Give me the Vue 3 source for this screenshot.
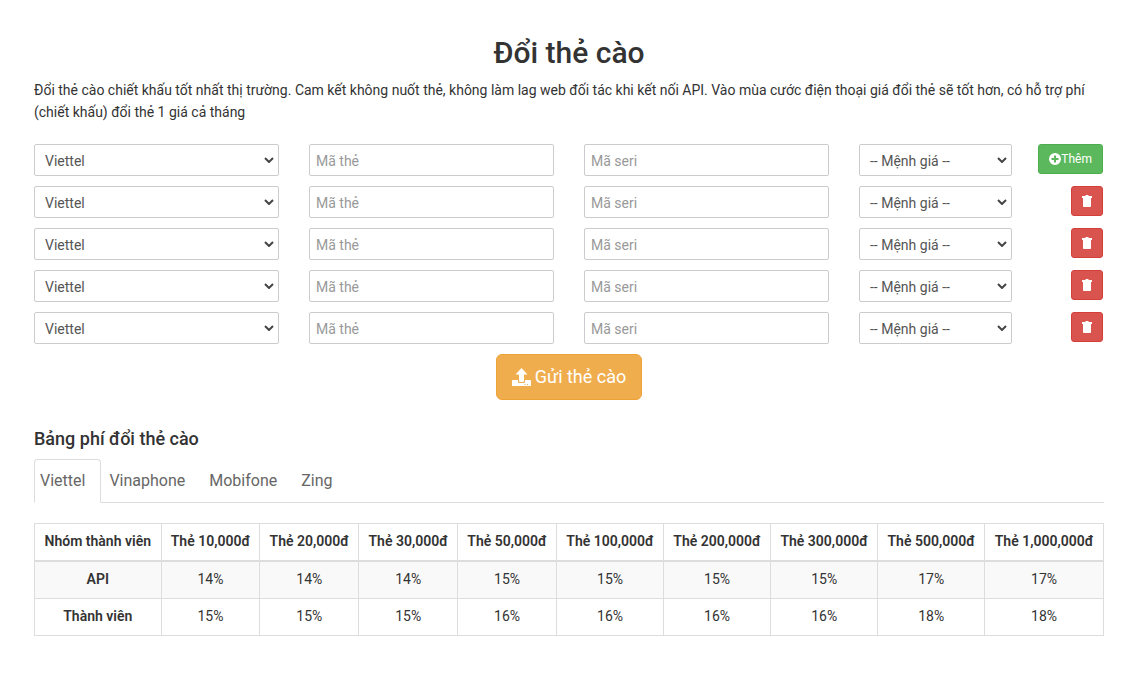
<script setup>
import { ref } from 'vue'

const carriers = ['Viettel', 'Vinaphone', 'Mobifone', 'Zing']
const amounts = ['10,000đ', '20,000đ', '30,000đ', '50,000đ', '100,000đ', '200,000đ', '300,000đ', '500,000đ', '1,000,000đ']
const groups = [
  { name: 'API', fees: [14, 14, 14, 15, 15, 15, 15, 17, 17] },
  { name: 'Thành viên', fees: [15, 15, 15, 16, 16, 16, 16, 18, 18] },
]

let nextId = 0
const newRow = () => ({ id: nextId++, carrier: 'Viettel', code: '', serial: '', amount: '' })
const rows = ref(Array.from({ length: 5 }, newRow))
const activeTab = ref('Viettel')

const addRow = () => rows.value.push(newRow())
const removeRow = (id) => {
  rows.value = rows.value.filter((row) => row.id !== id)
}
</script>

<template>
  <main class="page">
    <h1 class="title">Đổi thẻ cào</h1>
    <p class="intro">
      Đổi thẻ cào chiết khấu tốt nhất thị trường. Cam kết không nuốt thẻ, không làm lag web đối tác khi kết nối API. Vào mùa cước điện thoại giá đổi thẻ sẽ tốt hơn, có hỗ trợ phí (chiết khấu) đổi thẻ 1 giá cả tháng
    </p>

    <form @submit.prevent>
      <div v-for="(row, i) in rows" :key="row.id" class="row">
        <div class="select-box wide">
          <select v-model="row.carrier" class="control" aria-label="Nhà mạng">
            <option v-for="c in carriers" :key="c" :value="c">{{ c }}</option>
          </select>
          <svg class="chevron" viewBox="0 0 10 6" aria-hidden="true"><path d="M1 1l4 4 4-4" /></svg>
        </div>
        <input v-model="row.code" class="control wide" type="text" placeholder="Mã thẻ" aria-label="Mã thẻ" />
        <input v-model="row.serial" class="control wide" type="text" placeholder="Mã seri" aria-label="Mã seri" />
        <div class="select-box medium">
          <select v-model="row.amount" class="control" aria-label="Mệnh giá">
            <option value="">-- Mệnh giá --</option>
            <option v-for="a in amounts" :key="a" :value="a">{{ a }}</option>
          </select>
          <svg class="chevron" viewBox="0 0 10 6" aria-hidden="true"><path d="M1 1l4 4 4-4" /></svg>
        </div>
        <div class="action">
          <button v-if="i === 0" type="button" class="btn add" @click="addRow">
            <svg class="icon" viewBox="0 0 12 12" aria-hidden="true">
              <path fill-rule="evenodd" d="M6 0a6 6 0 1 0 0 12A6 6 0 0 0 6 0zM5 2.5h2V5h2.500v2H7v2.500H5V7H2.500V5H5z" />
            </svg>Thêm
          </button>
          <button v-else type="button" class="btn remove" aria-label="Xóa" @click="removeRow(row.id)">
            <svg class="icon" viewBox="0 0 12 14" aria-hidden="true">
              <path d="M4.500 1h3v1H11v2H1V2h3.500zM2 4h8v8c0 .6-.4 1-1 1H3c-.6 0-1-.4-1-1z" />
            </svg>
          </button>
        </div>
      </div>
      <div class="submit-line">
        <button type="submit" class="btn submit">
          <svg class="icon" viewBox="0 0 19 18" aria-hidden="true">
            <path d="M9.500 0l6 6.500H12V13q0 1-1 1H8q-1 0-1-1V6.500H3.500z" />
            <path fill-rule="evenodd" d="M.5 12H6v1.500Q6 15 7.500 15h4q1.500 0 1.500-1.500V12h5.500l.5.5V18H0v-5.500zM12.500 16v1h1v-1zm2.500 0v1h1v-1z" />
          </svg>
          Gửi thẻ cào
        </button>
      </div>
    </form>

    <h2 class="subtitle">Bảng phí đổi thẻ cào</h2>
    <nav class="tabs">
      <a v-for="c in carriers" :key="c" href="#" class="tab" :class="{ active: c === activeTab }" @click.prevent="activeTab = c">{{ c }}</a>
    </nav>

    <table class="fees">
      <thead>
        <tr>
          <th scope="col">Nhóm thành viên</th>
          <th v-for="a in amounts" :key="a" scope="col">Thẻ {{ a }}</th>
        </tr>
      </thead>
      <tbody>
        <tr v-for="g in groups" :key="g.name">
          <th scope="row">{{ g.name }}</th>
          <td v-for="(fee, i) in g.fees" :key="i">{{ fee }}%</td>
        </tr>
      </tbody>
    </table>
  </main>
</template>

<style>
body {
  background: #fff;
}
</style>

<style scoped>
.page,
.page * {
  box-sizing: border-box;
}
.page {
  padding: 36px 30px 48px 34px;
  color: #333;
  font: 14px/20px Roboto, "Noto Sans", sans-serif;
}
.title {
  margin: 0 0 9px;
  font-size: 30px;
  line-height: 34px;
  font-weight: 500;
  text-align: center;
}
.intro {
  margin: 0 0 21px;
  line-height: 22px;
}
.row {
  display: grid;
  grid-template-columns: repeat(12, minmax(0, 1fr));
  column-gap: 30px;
  margin-bottom: 10px;
}
.wide {
  grid-column: span 3;
}
.medium {
  grid-column: span 2;
}
.select-box {
  position: relative;
}
.control {
  display: block;
  width: 100%;
  height: 32px;
  padding: 1px 6px 0;
  border: 1px solid #ccc;
  border-radius: 2px;
  background: #fff;
  color: #555;
  font: inherit;
  appearance: none;
}
select.control {
  padding-left: 10px;
}
.control::placeholder {
  color: #999;
  opacity: 1;
}
.chevron {
  position: absolute;
  top: 13px;
  right: 5px;
  width: 10px;
  height: 6px;
  fill: none;
  stroke: #444;
  stroke-width: 2;
  pointer-events: none;
}
.action {
  display: flex;
  justify-content: flex-end;
  align-items: flex-start;
  padding-right: 1px;
}
.btn {
  display: inline-flex;
  align-items: center;
  justify-content: center;
  flex: none;
  border: 1px solid;
  border-radius: 3px;
  color: #fff;
  font-family: inherit;
  cursor: pointer;
}
.icon {
  fill: currentColor;
}
.add,
.remove {
  height: 30px;
  padding: 0 10px;
  font-size: 12px;
  line-height: 18px;
}
.add {
  background: #5cb85c;
  border-color: #4cae4c;
}
.remove {
  background: #d9534f;
  border-color: #d43f3a;
}
.add .icon {
  width: 12px;
  height: 12px;
}
.remove .icon {
  width: 12px;
  height: 14px;
  margin: 0 -1px;
}
.submit-line {
  display: flex;
  justify-content: center;
}
.submit {
  gap: 4px;
  height: 46px;
  padding: 0 15px;
  border-radius: 6px;
  background: #f0ad4e;
  border-color: #eea236;
  font-size: 18px;
  line-height: 24px;
}
.submit .icon {
  width: 19px;
  height: 18px;
}
.subtitle {
  margin: 29px 0 10px;
  font-size: 18px;
  line-height: 20px;
  font-weight: 500;
}
.tabs {
  display: flex;
  border-bottom: 1px solid #ddd;
}
.tab {
  margin: 0 2px -1px 0;
  padding: 10px 15px 10px 5px;
  border: 1px solid transparent;
  border-radius: 4px 4px 0 0;
  color: #666;
  font-size: 16px;
  line-height: 22px;
  text-decoration: none;
}
.tab.active {
  border-color: #ddd #ddd #fff;
  background: #fff;
}
.fees {
  width: 100%;
  margin-top: 20px;
  border-collapse: collapse;
  text-align: center;
}
.fees th,
.fees td {
  padding: 7px 8px 9px;
  border: 1px solid #ddd;
}
.fees th {
  font-weight: 600;
}
.fees thead th {
  border-bottom-width: 2px;
}
.fees tbody tr:nth-child(odd) {
  background: #f9f9f9;
}
</style>
